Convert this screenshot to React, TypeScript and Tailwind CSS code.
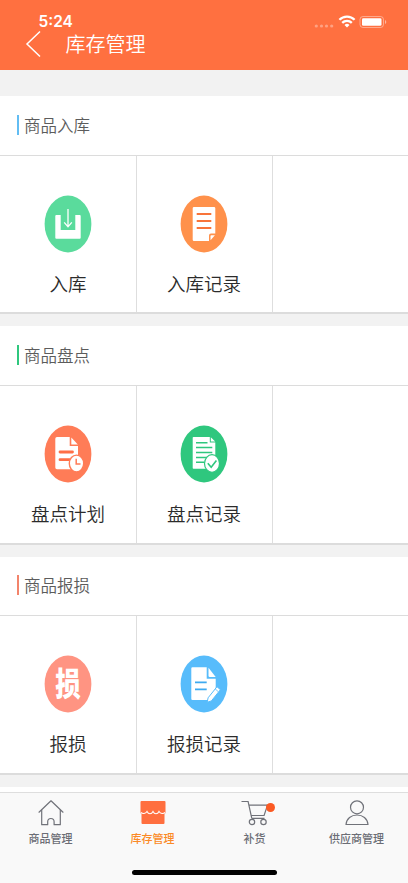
import type { ReactNode } from "react";

type Item = { label: string; color: string; glyph: ReactNode };
type Section = { title: string; bar: string; size: string; head: string; items: Item[] };

const sections: Section[] = [
  {
    title: "商品入库",
    bar: "bg-[#62bdf3]",
    size: "h-[218px]",
    head: "h-[60px]",
    items: [
      {
        label: "入库",
        color: "#5adb9c",
        glyph: (
          <>
            <path d="M12.3 20h4.400v15h14.600V20h4.400a1 1 0 0 1 1 1v21.700a1 1 0 0 1-1 1H12.300a1 1 0 0 1-1-1V21a1 1 0 0 1 1-1z" fill="#fff" />
            <path d="M24 14v18M20.200 27.300l3.800 4.500 3.800-4.500" fill="none" stroke="#fff" strokeWidth="1.300" />
          </>
        ),
      },
      {
        label: "入库记录",
        color: "#ff914b",
        glyph: (
          <>
            <path d="M14 12h20a1.300 1.300 0 0 1 1.300 1.300V38.500H31a2 2 0 0 0-2 2V46H14a1.300 1.300 0 0 1-1.300-1.300V13.300A1.300 1.300 0 0 1 14 12z" fill="#fff" />
            <path d="M31.300 40.300h3.600l-4.400 5v-4.200a.8.8 0 0 1 .8-.8z" fill="#fff" />
            <path d="M16.700 19h14.600M16.700 26h14.600M16.700 33h14.600" stroke="#f8743a" strokeWidth="2" />
          </>
        ),
      },
    ],
  },
  {
    title: "商品盘点",
    bar: "bg-[#2fc77e]",
    size: "h-[219px]",
    head: "h-[60px]",
    items: [
      {
        label: "盘点计划",
        color: "#ff7c57",
        glyph: (
          <>
            <path d="M13 12h12.700v9H34v23.300H13a1.700 1.700 0 0 1-1.700-1.700V13.700A1.700 1.700 0 0 1 13 12z" fill="#fff" />
            <path d="M27.300 12.500l6.500 7h-6.500z" fill="#fff" />
            <path d="M16 27h12.500M16 34.700h9.500" stroke="#ff6f47" strokeWidth="2.800" strokeLinecap="round" />
            <ellipse cx="32.500" cy="38.500" rx="7.200" ry="8.400" fill="#fff" stroke="#ff7c57" strokeWidth="1.400" />
            <path d="M32.200 33.800v5.200h4.300" fill="none" stroke="#ff7c57" strokeWidth="1.500" />
          </>
        ),
      },
      {
        label: "盘点记录",
        color: "#2fc77e",
        glyph: (
          <>
            <path d="M13.500 12h16.300v5.500h5.500v26.200H13.500a.8.8 0 0 1-.8-.8V12.800a.8.8 0 0 1 .8-.8z" fill="#fff" />
            <path d="M30.800 12.200l4.400 4.300h-4.400z" fill="#fff" />
            <path d="M16 17.700h11.500M16 22.500h16.300M16 27.500h16.300M16 32.500h12M16 37.300h8" stroke="#2fc77e" strokeWidth="1.500" />
            <ellipse cx="32" cy="38.500" rx="7.500" ry="8.800" fill="#fff" stroke="#2fc77e" strokeWidth="1.200" />
            <path d="M27.800 38.200l3.400 4 5.200-6.700" fill="none" stroke="#2fc77e" strokeWidth="1.600" />
          </>
        ),
      },
    ],
  },
  {
    title: "商品报损",
    bar: "bg-[#f3846b]",
    size: "h-[218px]",
    head: "h-[59px]",
    items: [
      {
        label: "报损",
        color: "#ff9482",
        glyph: (
          <text
            transform="translate(24 41) scale(1 1.280)"
            textAnchor="middle"
            fontSize="25.500"
            fontWeight="900"
            fill="#fff"
          >
            损
          </text>
        ),
      },
      {
        label: "报损记录",
        color: "#57bcfb",
        glyph: (
          <>
            <path d="M12.500 12.300h14.200v11.500h9V33.500L28 45H12.500a1.200 1.200 0 0 1-1.200-1.200V13.500a1.200 1.200 0 0 1 1.200-1.200z" fill="#fff" />
            <path d="M28.500 12.800l7.200 9.200h-6a1.200 1.200 0 0 1-1.200-1.200z" fill="#fff" />
            <path d="M15 27.300h11.700M15 34.300h11.700" stroke="#3eaaf0" strokeWidth="1.700" />
            <path d="M37 31.700l3.400 3-9 11.200-4.200 1.400.9-4.500z" fill="#fff" stroke="#57bcfb" strokeWidth="1" />
            <path d="M35.200 33.900l3.200 2.900" stroke="#57bcfb" strokeWidth=".8" />
          </>
        ),
      },
    ],
  },
];

function StatusIcons() {
  return (
    <svg width="74" height="16" viewBox="0 0 74 16" className="mt-[14px]">
      <g fill="#fff" fillOpacity=".35">
        <circle cx="2.300" cy="12" r="1.600" />
        <circle cx="7.500" cy="12" r="1.600" />
        <circle cx="12.500" cy="12" r="1.600" />
        <circle cx="17.700" cy="12" r="1.600" />
      </g>
      <g fill="none" stroke="#fff" strokeWidth="2.300">
        <path d="M25.400 6.300a10.700 10.700 0 0 1 15.200 0" transform="translate(0 -.5)" />
        <path d="M28.200 9.200a6.800 6.800 0 0 1 9.600 0" transform="translate(0 -.3)" />
      </g>
      <path d="M30.500 11a3.700 3.700 0 0 1 5 0L33 13.600z" fill="#fff" />
      <rect x="46" y="2.500" width="23.500" height="11" rx="3" fill="none" stroke="#fff" strokeOpacity=".4" />
      <rect x="48" y="4.200" width="19.500" height="7.600" rx="1.300" fill="#fff" />
      <path d="M71 6v4a2.200 2.200 0 0 0 0-4z" fill="#fff" fillOpacity=".5" />
    </svg>
  );
}

function Cell({ item }: { item?: Item }) {
  return (
    <div className="flex flex-col items-center border-r border-[#dedede] pt-[39px] pr-px first:pr-0 last:border-r-0">
      {item && (
        <>
          <svg width="48" height="58" viewBox="0 0 48 58">
            <ellipse cx="24" cy="29" rx="23.400" ry="28.400" fill={item.color} />
            {item.glyph}
          </svg>
          <span className="mt-[16px] text-[18.500px] leading-[28px] font-[350] text-[#2b2b2b]">{item.label}</span>
        </>
      )}
    </div>
  );
}

const tabs = [
  {
    label: "商品管理",
    icon: (
      <g fill="none" stroke="#707279" strokeWidth="1.200" strokeLinejoin="round" strokeLinecap="round">
        <path d="M2 13.200L14 1.800l12 11.400" />
        <path d="M4.700 11v14.700h6v-3a3.200 3.200 0 0 1 6.400 0v3h6.200V11" />
      </g>
    ),
  },
  {
    label: "库存管理",
    active: true,
    icon: (
      <>
        <path d="M2.500 2h23a1 1 0 0 1 1 1v11.300h-1V24a1 1 0 0 1-1 1H3.500a1 1 0 0 1-1-1v-9.700h-1V3a1 1 0 0 1 1-1z" fill="#ff6f3f" />
        <path d="M2 13.300c1.500 1.700 4.500 1.700 6-.8 1.500 3 4.500 3 6 0 1.500 3 4.500 3 6 0 1.500 2.500 4.500 2.500 6 .8" fill="none" stroke="#fff" strokeWidth="1.100" />
      </>
    ),
  },
  {
    label: "补货",
    badge: true,
    icon: (
      <g fill="none" stroke="#707279" strokeWidth="1.200">
        <path d="M.5 2.500h6.600L10.800 19.300M8 6.200h18.500l-3.400 10.300H10.300M10.800 19.300h12.700" />
        <circle cx="11" cy="23" r="2.700" />
        <circle cx="22.500" cy="23" r="2.700" />
      </g>
    ),
  },
  {
    label: "供应商管理",
    icon: (
      <g fill="none" stroke="#707279" strokeWidth="1.200" strokeLinejoin="round">
        <circle cx="14" cy="8.300" r="6.500" />
        <path d="M3 25.500c.5-6 5.300-9.500 11-9.500s10.500 3.500 11 9.500z" />
      </g>
    ),
  },
];

export default function App() {
  return (
    <div className="flex h-[883px] w-[408px] flex-col overflow-hidden bg-[#f2f2f2] font-['Noto_Sans_CJK_SC',sans-serif]">
      <header className="h-[70px] shrink-0 bg-[#ff7040] text-white">
        <div className="flex h-[30px] justify-between pr-[20px] pl-[38.500px]">
          <span className="pt-[13px] font-[Inter,sans-serif] text-[15.500px] leading-[18px] font-semibold">5:24</span>
          <StatusIcons />
        </div>
        <div className="flex h-[28px] items-center pl-[25px]">
          <svg width="17" height="28" viewBox="0 0 17 28" fill="none" stroke="#fff" strokeWidth="1.500">
            <path d="M15 1.500L2 14l13 12.500" />
          </svg>
          <h1 className="ml-[23.500px] text-[20px] leading-[28px] font-[350]">库存管理</h1>
        </div>
      </header>

      <main className="flex min-h-0 flex-1 flex-col gap-[12px] overflow-hidden pt-[26px]">
        {sections.map((section) => (
          <section key={section.title} className={`flex shrink-0 flex-col border-b-2 border-[#dcdcdc] bg-white ${section.size}`}>
            <div className={`flex shrink-0 items-center border-b border-[#dcdcdc] pb-[2px] pl-[16.500px] ${section.head}`}>
              <span className={`h-[20px] w-[2.500px] ${section.bar}`} />
              <h2 className="ml-[5px] text-[16.500px] leading-[24px] font-[350] text-[#5c5c5c]">{section.title}</h2>
            </div>
            <div className="grid flex-1 grid-cols-[137px_136px_135px]">
              <Cell item={section.items[0]} />
              <Cell item={section.items[1]} />
              <Cell />
            </div>
          </section>
        ))}
        <div className="h-[20px] shrink-0 bg-white" />
      </main>

      <nav className="flex h-[91px] shrink-0 flex-col items-center border-t border-[#dedede] bg-[#f9f9f9]">
        <div className="grid h-[77px] w-full grid-cols-4">
          {tabs.map((tab) => (
            <div key={tab.label} className="flex flex-col items-center pt-[6px] pr-px">
              <div className="relative">
                <svg width="28" height="28" viewBox="0 0 28 28">
                  {tab.icon}
                </svg>
                {tab.badge && <span className="absolute top-[4px] left-[25px] size-[9px] rounded-full bg-[#fb5a23]" />}
              </div>
              <span className={`mt-[3px] text-[11px] leading-[16px] font-medium ${tab.active ? "text-[#fb8a26]" : "text-[#6b6d75]"}`}>
                {tab.label}
              </span>
            </div>
          ))}
        </div>
        <div className="h-[5px] w-[145px] rounded-full bg-black" />
      </nav>
    </div>
  );
}
